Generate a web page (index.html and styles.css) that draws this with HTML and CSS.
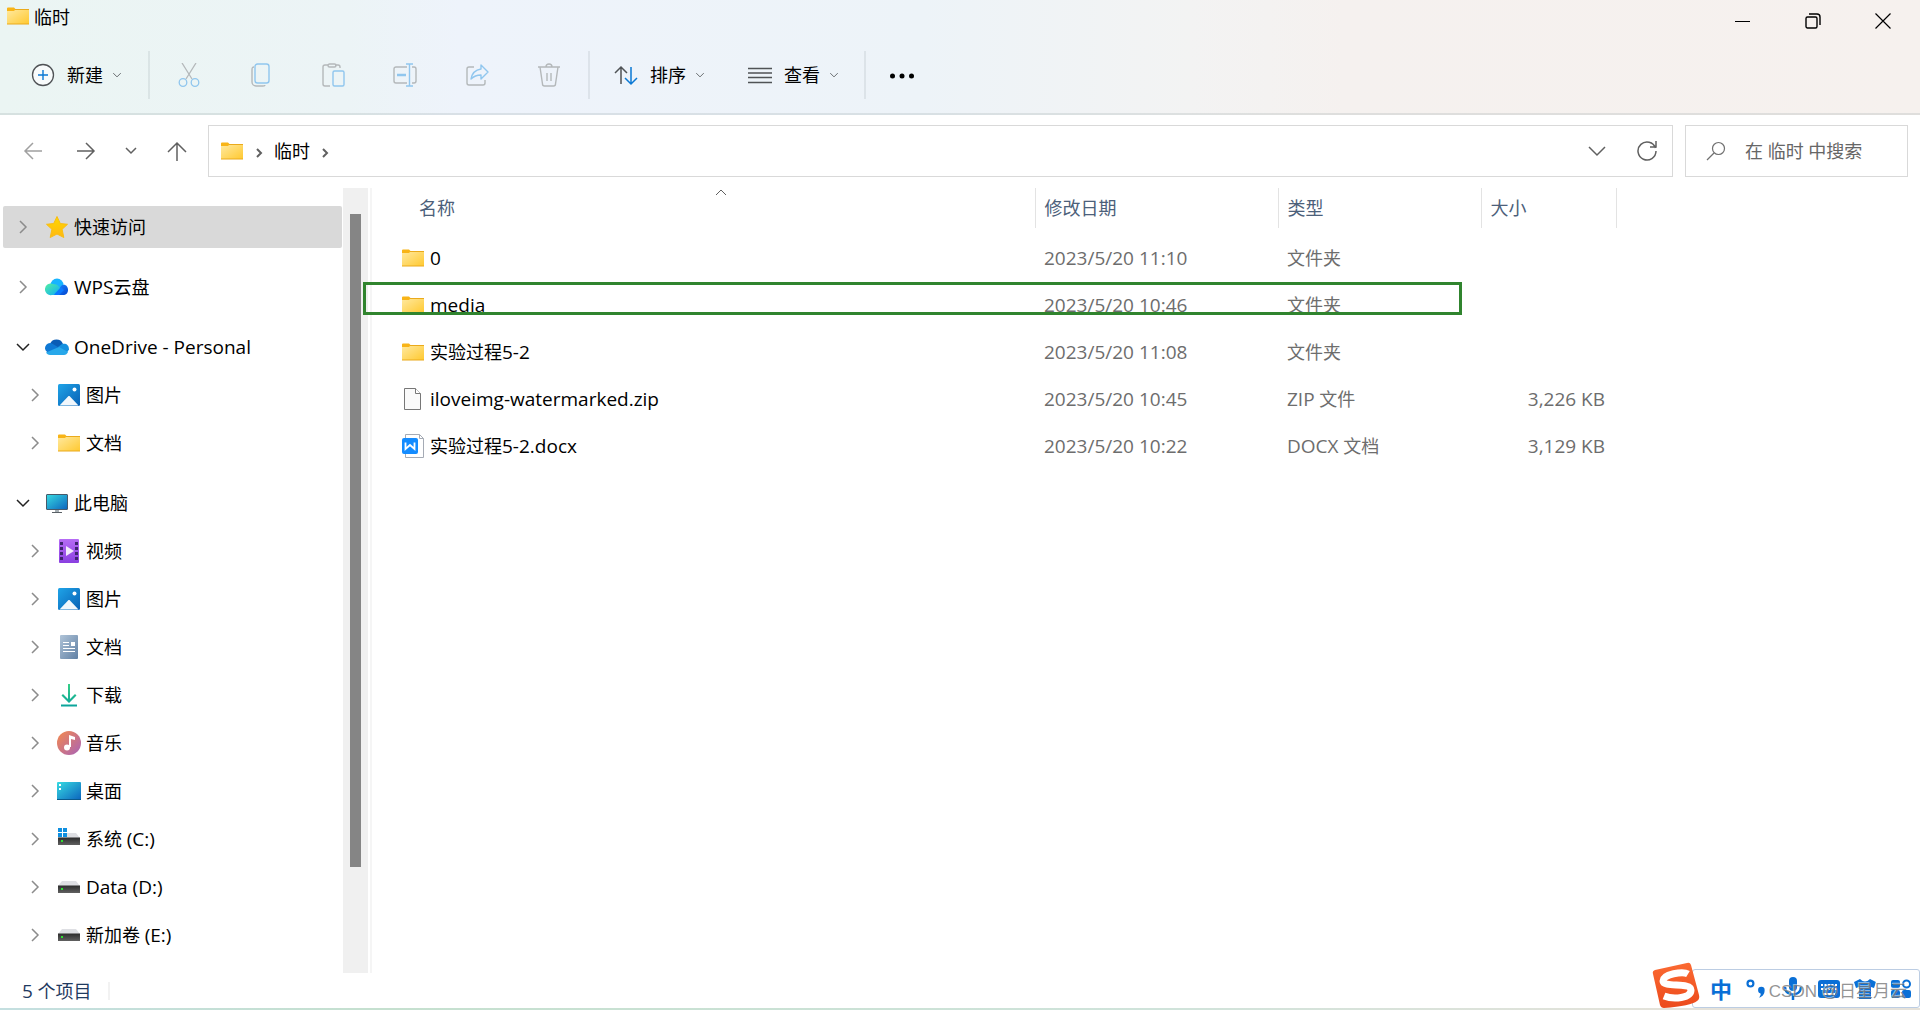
FILE: index.html
```html
<!DOCTYPE html>
<html lang="zh-CN">
<head>
<meta charset="utf-8">
<title>临时</title>
<link rel="stylesheet" href="styles.css">
</head>
<body>
<svg class="defs" aria-hidden="true">
  <defs>
    <linearGradient id="gFolder" x1="0" y1="0" x2="1" y2="1"><stop offset="0" stop-color="#ffe9a0"/><stop offset="1" stop-color="#ffc930"/></linearGradient>
    <linearGradient id="gBlue" x1="0" y1="0" x2="1" y2="1"><stop offset="0" stop-color="#1fa4e8"/><stop offset="1" stop-color="#0860b4"/></linearGradient>
    <linearGradient id="gCyan" x1="0" y1="0" x2="1" y2="1"><stop offset="0" stop-color="#37dbe2"/><stop offset="1" stop-color="#0c63bd"/></linearGradient>
    <linearGradient id="gVideo" x1="0" y1="0" x2="0" y2="1"><stop offset="0" stop-color="#b66cf5"/><stop offset="1" stop-color="#8a3fe0"/></linearGradient>
    <linearGradient id="gDoc" x1="0" y1="0" x2="1" y2="1"><stop offset="0" stop-color="#b0c4d8"/><stop offset="1" stop-color="#6080a4"/></linearGradient>
    <linearGradient id="gDown" x1="0" y1="0" x2="0" y2="1"><stop offset="0" stop-color="#36cf86"/><stop offset="1" stop-color="#0aa39c"/></linearGradient>
    <linearGradient id="gMusic" x1="0" y1="0" x2="1" y2="1"><stop offset="0" stop-color="#f58a4c"/><stop offset="1" stop-color="#a862b8"/></linearGradient>
    <linearGradient id="gStar" x1="0" y1="0" x2="0" y2="1"><stop offset="0" stop-color="#ffd800"/><stop offset="1" stop-color="#ffb812"/></linearGradient>
    <linearGradient id="gWpsL" x1="0" y1="0" x2="1" y2="1"><stop offset="0" stop-color="#52f0a0"/><stop offset="1" stop-color="#0aa8ff"/></linearGradient>
    <linearGradient id="gWpsR" x1="0" y1="0" x2="1" y2="1"><stop offset="0" stop-color="#1a86ff"/><stop offset="1" stop-color="#0346d0"/></linearGradient>
    <linearGradient id="gDrive" x1="0" y1="0" x2="0" y2="1"><stop offset="0" stop-color="#2c2c2c"/><stop offset="1" stop-color="#606060"/></linearGradient>
    <linearGradient id="gS" x1="0" y1="0" x2="0" y2="1"><stop offset="0" stop-color="#fb6a32"/><stop offset="1" stop-color="#ec4a1c"/></linearGradient>
    <symbol id="folder" viewBox="0 1 24 24"><path d="M1 5.500a1 1 0 0 1 1-1h6l1.500 1.500-1 3H1z" fill="#f8b417" stroke="none"/><path d="M1 8h7l1.500-1.500H23V21H1z" fill="url(#gFolder)" stroke="none"/><path d="M9 6.500h14M1 21h22" stroke="#eaaa1c" stroke-width="1" fill="none"/></symbol>
    <symbol id="star" viewBox="0 0 24 24"><path d="M12 1.500l3.300 7 7.200.8-5.400 5 1.700 8.200L12 19l-6.800 3.500 1.700-8.200-5.400-5 7.200-.8z" fill="url(#gStar)" stroke="#f9bd14" stroke-linejoin="round"/></symbol>
    <symbol id="wps" viewBox="0 0 24 24"><circle cx="12" cy="10" r="6.500" fill="#17b4ff"/><path d="M11 20l5-9c3-3 7-.5 7 4 0 3-2 5-5 5z" fill="url(#gWpsR)"/><path d="M7 20a5.800 5.800 0 1 1 1-11c5 0 6 3 8 5l-5 6z" fill="url(#gWpsL)"/><path d="M10 18.500l6-6.500 3 3-5 5h-5z" fill="#0a78ff"/></symbol>
    <symbol id="onedrive" viewBox="0 0 24 24"><path d="M5 9a7 7 0 0 1 13 0l-5 5z" fill="#0a5cb5"/><path d="M4 18a5 5 0 1 1 3-9.500l10 6-7 4z" fill="#0f78d4"/><path d="M13 12l4-3c4-1 7 1 7 5.500l-2 3z" fill="#1490df"/><path d="M1 17.500l13-5.500 9 5c-1 2-2 3-4 3H5c-2 0-3-1-4-2.500z" fill="#28a8ea"/></symbol>
    <symbol id="picture" viewBox="0 0 24 24"><rect x="1" y="1" width="22" height="22" rx="1.500" fill="url(#gBlue)"/><path d="M2.500 22.500l9-9.500h1l9 9.500z" fill="#f1f7fc"/><circle cx="17.500" cy="6.500" r="2" fill="#fff"/></symbol>
    <symbol id="pc" viewBox="0 0 24 24"><path d="M10 19h4v2h-4z" fill="#a7afb4"/><path d="M7 21.500h10" stroke="#596065"/><rect x="1.500" y="3.500" width="21" height="15" rx=".5" fill="url(#gCyan)" stroke="#47596a"/></symbol>
    <symbol id="video" viewBox="0 0 24 24"><rect x="2" y="0" width="20" height="24" rx="1" fill="url(#gVideo)"/><path d="M4.500 3v19M19.500 3v19" stroke="#3f2470" stroke-width="3" stroke-dasharray="3 2"/><path d="M9 7l8 5-8 5z" fill="#f3ebfb"/></symbol>
    <symbol id="document" viewBox="0 0 24 24"><rect x="3" y="0" width="18" height="24" rx="1" fill="url(#gDoc)"/><path d="M6 7.500h6M6 10.500h6M6 13.500h12M6 16.500h12" stroke="#fff"/><path d="M14 7h4v4h-4z" fill="#fff"/></symbol>
    <symbol id="download" viewBox="0 0 24 24"><path d="M11 1h2v15l5-5 1.500 1.500L12 20l-7.500-7.500L6 11l5 5zM4 21.500h16v2H4z" fill="url(#gDown)"/></symbol>
    <symbol id="music" viewBox="0 0 24 24"><circle cx="12" cy="12" r="12" fill="url(#gMusic)"/><circle cx="10" cy="16.500" r="3" fill="#fff"/><path d="M12 16V4l6 2v3l-4-1v8z" fill="#fff"/></symbol>
    <symbol id="desktop" viewBox="0 0 24 24"><rect y="3" width="24" height="18" rx="1" fill="url(#gCyan)"/><path d="M0 20.500h24" stroke="#0a5a8c"/><path d="M2 5h2v2H2zM2 9h2v2H2z" fill="#fff"/></symbol>
    <symbol id="drive" viewBox="0 0 24 24"><path d="M5 6h14l4 5H1z" fill="#dedfe3"/><rect x="1" y="10.500" width="22" height="7.500" fill="url(#gDrive)"/><path d="M4 13h2v2H4z" fill="#2de030"/></symbol>
    <symbol id="sysdrive" viewBox="0 0 24 24"><path d="M5 6h14l4 5H1z" fill="#dedfe3"/><rect x="1" y="10.500" width="22" height="7.500" fill="url(#gDrive)"/><path d="M4 13h2v2H4z" fill="#2de030"/><path d="M1 1h9v9H1z" fill="#fff"/><path d="M1 1h4v4H1zM6 1h4v4H6zM1 6h4v4H1zM6 6h4v4H6z" fill="#0f8fe0"/></symbol>
    <symbol id="file" viewBox="0 0 24 24"><path d="M3.500 1.500h11l5 5v16h-16z" fill="#fafafa" stroke="#777"/><path d="M14.500 1.500v5h5" fill="#fff" stroke="#777"/></symbol>
    <symbol id="docx" viewBox="0 0 24 24"><path d="M4.500 .5h14l4 4v19h-18z" fill="#fff" stroke="#a5abb5"/><path d="M18.500.5v4h4" fill="none" stroke="#a5abb5"/><rect x="1" y="4" width="16" height="16" rx="2" fill="#148cff"/><path d="M4.500 8.500v6.500l4.500-4 4.500 4V8.500" fill="none" stroke="#fff" stroke-width="1.800"/></symbol>
    <symbol id="right" viewBox="0 0 16 16"><path d="M5 2l6 6-6 6" fill="none" stroke="currentColor" stroke-width="1.500"/></symbol>
    <symbol id="down" viewBox="0 0 16 16"><path d="M2 5l6 6 6-6" fill="none" stroke="currentColor" stroke-width="1.500"/></symbol>
  </defs>
</svg>

<header class="top">
  <div class="titlebar">
    <h1 class="title"><svg class="ico"><use href="#folder"/></svg>临时</h1>
    <div class="winbtns">
      <button aria-label="最小化"><svg viewBox="0 0 16 16"><path d="M0 8.500h15" stroke="#000"/></svg></button>
      <button aria-label="还原"><svg viewBox="0 0 16 16" fill="none" stroke="#000" stroke-width="1.400"><rect x="1" y="4" width="11" height="11" rx="1.500"/><path d="M4 1h8a3 3 0 0 1 3 3v8"/></svg></button>
      <button aria-label="关闭"><svg viewBox="0 0 16 16"><path d="M.5.5l15 15M15.500.5l-15 15" stroke="#000" stroke-width="1.200"/></svg></button>
    </div>
  </div>
  <div class="toolbar">
    <button class="cmd new"><svg class="ico" viewBox="0 0 24 24" fill="none"><circle cx="12" cy="12" r="10.500" stroke="#505356" stroke-width="1.300" fill="#f8fbfb"/><path d="M12 7v10M7 12h10" stroke="#0a78d4" stroke-width="1.400"/></svg>新建<svg class="mini"><use href="#down"/></svg></button>
    <span class="sep"></span>
    <div class="icons">
      <button disabled aria-label="剪切"><svg viewBox="0 0 24 24" fill="none" stroke-width="1.300"><path d="M5 0l10 16M19 0L9 16" stroke="#b4b8ba"/><circle cx="6" cy="19.500" r="3.800" stroke="#90c6ee"/><circle cx="18" cy="19.500" r="3.800" stroke="#90c6ee"/></svg></button>
      <button disabled aria-label="复制"><svg viewBox="0 0 24 24" fill="none" stroke-width="1.400"><path d="M5 4c-2 0-2 1-2 3v12a4 4 0 0 0 4 4h7c2 0 2-1 2-1" stroke="#b4b8ba"/><rect x="6" y="1" width="14" height="19" rx="2.500" stroke="#90c6ee"/></svg></button>
      <button disabled aria-label="粘贴"><svg viewBox="0 0 24 24" fill="none" stroke-width="1.400"><path d="M9 23H4a2 2 0 0 1-2-2V4a2 2 0 0 1 2-2h3M14 2h3a2 2 0 0 1 2 2v1" stroke="#b4b8ba"/><rect x="7" y="1" width="8" height="3" rx="1.500" stroke="#b4b8ba"/><rect x="12" y="8" width="11" height="15" rx="1.500" stroke="#90c6ee"/></svg></button>
      <button disabled aria-label="重命名"><svg viewBox="0 0 24 24" fill="none" stroke-width="1.400"><path d="M14 4H3a2 2 0 0 0-2 2v12a2 2 0 0 0 2 2h11M19 4h2a2 2 0 0 1 2 2v12a2 2 0 0 1-2 2h-2" stroke="#b4b8ba"/><path d="M13 1h7M13 23h7M16.500 1v22" stroke="#90c6ee"/><path d="M4 12h9" stroke="#90c6ee" stroke-width="2.500"/></svg></button>
      <button disabled aria-label="共享"><svg viewBox="0 0 24 24" fill="none" stroke-width="1.400"><path d="M9 4H4a2 2 0 0 0-2 2v14a2 2 0 0 0 2 2h14a2 2 0 0 0 2-2v-3" stroke="#b4b8ba"/><path d="M16 2l7 7-7 7v-4c-4 0-7 1-10 4 1-6 4-9 10-10z" stroke="#90c6ee" stroke-linejoin="round"/></svg></button>
      <button disabled aria-label="删除"><svg viewBox="0 0 24 24" fill="none" stroke="#b4b8ba" stroke-width="1.400"><path d="M1 4h22M3 4l2.500 17a2 2 0 0 0 2 2h9a2 2 0 0 0 2-2L21 4M9 4c0-4 6-4 6 0M10 10v8M14 10v8"/></svg></button>
    </div>
    <span class="sep"></span>
    <button class="cmd sort"><svg class="ico" viewBox="0 0 24 24" fill="none" stroke-width="1.500"><path d="M7 21V4M1 10l6-6 6 6" stroke="#505356"/><path d="M17 4v17M11 15l6 6 6-6" stroke="#0a78d4"/></svg>排序<svg class="mini"><use href="#down"/></svg></button>
    <button class="cmd view"><svg class="ico" viewBox="0 0 24 24"><path d="M0 5.500h24M0 10h24M0 14.500h24M0 19.500h24" stroke="#505356" stroke-width="1.300"/></svg>查看<svg class="mini"><use href="#down"/></svg></button>
    <span class="sep"></span>
    <button class="cmd more" aria-label="更多"><svg class="ico" viewBox="0 0 24 24"><circle cx="2.500" cy="13" r="2.500"/><circle cx="12" cy="13" r="2.500"/><circle cx="21.500" cy="13" r="2.500"/></svg></button>
  </div>
</header>

<div class="navrow">
  <div class="navbtns">
    <button class="dim" aria-label="后退"><svg viewBox="0 0 20 20"><path d="M19 10H2M10 2l-8 8 8 8"/></svg></button>
    <button aria-label="前进"><svg viewBox="0 0 20 20"><path d="M1 10h17M10 2l8 8-8 8"/></svg></button>
    <button class="recent" aria-label="最近位置"><svg viewBox="0 0 16 16"><path d="M3 5l5 5 5-5"/></svg></button>
    <button aria-label="向上"><svg viewBox="0 0 20 20"><path d="M10 20V2M1 11l9-9 9 9"/></svg></button>
  </div>
  <nav class="address">
    <svg class="ico"><use href="#folder"/></svg>
    <svg class="crumb" viewBox="0 0 12 12"><path d="M4 2l4 4-4 4"/></svg>
    <a href="#">临时</a>
    <svg class="crumb" viewBox="0 0 12 12"><path d="M4 2l4 4-4 4"/></svg>
    <button class="drop" aria-label="历史记录"><svg viewBox="0 0 20 20"><path d="M2 6l8 8 8-8"/></svg></button>
    <button class="reload" aria-label="刷新"><svg viewBox="0 0 20 20"><path d="M18.500 7A9 9 0 1 0 19 10M19 0v6h-6"/></svg></button>
  </nav>
  <label class="search"><svg viewBox="0 0 20 20"><circle cx="12.500" cy="7.500" r="6"/><path d="M8 12l-7 7"/></svg><input type="search" placeholder="在 临时 中搜索" aria-label="在 临时 中搜索"></label>
</div>

<div class="body">
  <aside class="tree">
    <ul>
      <li class="selected"><button aria-label="展开"><svg><use href="#right"/></svg></button><a href="#"><svg class="ico"><use href="#star"/></svg>快速访问</a></li>
    </ul>
    <ul>
      <li><button aria-label="展开"><svg><use href="#right"/></svg></button><a href="#"><svg class="ico"><use href="#wps"/></svg><span><span class="en">WPS</span>云盘</span></a></li>
    </ul>
    <ul>
      <li class="open"><button aria-label="折叠"><svg><use href="#down"/></svg></button><a href="#"><svg class="ico"><use href="#onedrive"/></svg><span class="en">OneDrive - Personal</span></a></li>
      <li class="sub"><button aria-label="展开"><svg><use href="#right"/></svg></button><a href="#"><svg class="ico"><use href="#picture"/></svg>图片</a></li>
      <li class="sub"><button aria-label="展开"><svg><use href="#right"/></svg></button><a href="#"><svg class="ico"><use href="#folder"/></svg>文档</a></li>
    </ul>
    <ul>
      <li class="open"><button aria-label="折叠"><svg><use href="#down"/></svg></button><a href="#"><svg class="ico"><use href="#pc"/></svg>此电脑</a></li>
      <li class="sub"><button aria-label="展开"><svg><use href="#right"/></svg></button><a href="#"><svg class="ico"><use href="#video"/></svg>视频</a></li>
      <li class="sub"><button aria-label="展开"><svg><use href="#right"/></svg></button><a href="#"><svg class="ico"><use href="#picture"/></svg>图片</a></li>
      <li class="sub"><button aria-label="展开"><svg><use href="#right"/></svg></button><a href="#"><svg class="ico"><use href="#document"/></svg>文档</a></li>
      <li class="sub"><button aria-label="展开"><svg><use href="#right"/></svg></button><a href="#"><svg class="ico"><use href="#download"/></svg>下载</a></li>
      <li class="sub"><button aria-label="展开"><svg><use href="#right"/></svg></button><a href="#"><svg class="ico"><use href="#music"/></svg>音乐</a></li>
      <li class="sub"><button aria-label="展开"><svg><use href="#right"/></svg></button><a href="#"><svg class="ico"><use href="#desktop"/></svg>桌面</a></li>
      <li class="sub"><button aria-label="展开"><svg><use href="#right"/></svg></button><a href="#"><svg class="ico"><use href="#sysdrive"/></svg><span>系统 <span class="en">(C:)</span></span></a></li>
      <li class="sub"><button aria-label="展开"><svg><use href="#right"/></svg></button><a href="#"><svg class="ico"><use href="#drive"/></svg><span class="en">Data (D:)</span></a></li>
      <li class="sub"><button aria-label="展开"><svg><use href="#right"/></svg></button><a href="#"><svg class="ico"><use href="#drive"/></svg><span>新加卷 <span class="en">(E:)</span></span></a></li>
    </ul>
  </aside>
  <div class="scrollbar"><div class="thumb"></div></div>
  <main class="files">
    <table>
      <colgroup><col class="c-name"><col class="c-date"><col class="c-type"><col class="c-size"></colgroup>
      <thead><tr><th>名称<svg class="sortmark" viewBox="0 0 12 8"><path d="M1 7l5-5 5 5"/></svg></th><th>修改日期</th><th>类型</th><th>大小</th></tr></thead>
      <tbody>
        <tr><td><a href="#"><svg class="ico"><use href="#folder"/></svg><span class="en">0</span></a></td><td class="en">2023/5/20 11:10</td><td>文件夹</td><td></td></tr>
        <tr><td><a href="#"><svg class="ico"><use href="#folder"/></svg><span class="en">media</span></a></td><td class="en">2023/5/20 10:46</td><td>文件夹</td><td></td></tr>
        <tr><td><a href="#"><svg class="ico"><use href="#folder"/></svg><span>实验过程<span class="en">5-2</span></span></a></td><td class="en">2023/5/20 11:08</td><td>文件夹</td><td></td></tr>
        <tr><td><a href="#"><svg class="ico"><use href="#file"/></svg><span class="en">iloveimg-watermarked.zip</span></a></td><td class="en">2023/5/20 10:45</td><td><span class="en">ZIP</span> 文件</td><td class="en">3,226 KB</td></tr>
        <tr><td><a href="#"><svg class="ico"><use href="#docx"/></svg><span>实验过程<span class="en">5-2.docx</span></span></a></td><td class="en">2023/5/20 10:22</td><td><span class="en">DOCX</span> 文档</td><td class="en">3,129 KB</td></tr>
      </tbody>
    </table>
    <div class="highlight"></div>
  </main>
</div>

<footer class="status"><span><span class="en">5</span> 个项目</span></footer>

<div class="ime">
  <svg class="slogo" viewBox="0 0 48 48"><path d="M3 8L35 1q3-1 4 2l8 30q1 4-2 6-6 5-33 7-3 0-4-3L1 12q-1-3 2-4z" fill="url(#gS)"/><path d="M36 12C31 9 11 12 11 19s28 1 28 9-17 10-27 6" fill="none" stroke="#fff" stroke-width="7"/></svg>
  <span class="zh">中</span>
  <svg class="punct" viewBox="0 0 20 22"><circle cx="4" cy="6" r="2.700" fill="none" stroke="#0a6fd6" stroke-width="2"/><path d="M11 12a3 3 0 0 1 6 0c0 4-2 6-5 7 1-2 2-3 1-4-1 0-2-1-2-3z" fill="#0a6fd6"/></svg>
  <svg viewBox="0 0 22 24"><rect x="7" y="0" width="8" height="14" rx="4" fill="#0a6fd6"/><path d="M3 10c0 10 16 10 16 0M11 18v5" fill="none" stroke="#0a6fd6" stroke-width="2.500"/></svg>
  <svg viewBox="0 0 22 24"><rect y="3" width="22" height="18" rx="3" fill="#0a6fd6"/><path d="M3 8h16M3 12h16" stroke="#fff" stroke-width="2" stroke-dasharray="2 1.500"/><path d="M5 17h12" stroke="#fff" stroke-width="2"/></svg>
  <svg viewBox="0 0 22 24"><path d="M6 2q5 5 10 0l6 3-2 6-3-1v12H5V10l-3 1-2-6z" fill="#0a6fd6"/></svg>
  <svg viewBox="0 0 22 24" fill="#0a6fd6"><rect x="1" y="3" width="9" height="8" rx="2"/><circle cx="16.500" cy="7" r="3.500" fill="none" stroke="#0a6fd6" stroke-width="2"/><rect x="1" y="13" width="9" height="8" rx="2"/><rect x="12" y="13" width="9" height="8" rx="2"/></svg>
  <span class="watermark">CSDN @日星月云</span>
</div>
</body>
</html>
```
FILE: styles.css
```css
* { box-sizing: border-box; }
body {
  margin: 0;
  min-height: 100vh;
  display: flex;
  flex-direction: column;
  position: relative;
  background: #fff;
  color: #000;
  font: 18px/24px "Open Sans", "Noto Sans CJK SC", sans-serif;
}
.defs { position: absolute; width: 0; height: 0; }
button { border: 0; padding: 0; background: none; color: inherit; font: inherit; display: flex; align-items: center; justify-content: center; }
a { color: inherit; text-decoration: none; }
svg { flex: none; }
.ico { width: 24px; height: 24px; }
.en { font-size: 19px; }

.top {
  height: 115px;
  border-bottom: 2px solid rgba(120, 140, 140, .18);
  background: linear-gradient(90deg, #ebf5f3 0, #ecf4f6 18%, #eef3fb 24%, #edf3f8 48%, #f3f3f3 62%, #f5f1ef 70%, #f6f1ee 100%);
}
.titlebar { display: flex; justify-content: space-between; height: 42px; }
.title { display: flex; align-items: center; gap: 4px; margin: 0; height: 34px; padding-left: 6px; font-size: 18px; font-weight: 400; }
.title .ico { margin-top: -3px; }
.winbtns { display: flex; padding-right: 2px; }
.winbtns button { width: 70px; height: 42px; }
.winbtns svg { width: 16px; height: 16px; }

.toolbar { display: flex; align-items: center; height: 66px; }
.cmd { height: 48px; }
.cmd .ico { margin-right: 12px; }
.mini { width: 10px; height: 10px; margin-left: 9px; color: #606468; }
.new { width: 148px; justify-content: flex-start; padding-left: 31px; }
.sep { width: 2px; height: 48px; background: rgba(100, 115, 120, .12); }
.icons { display: flex; padding: 0 3px; }
.icons button { width: 72px; height: 48px; }
.icons svg { width: 24px; height: 24px; }
.sort { padding-left: 24px; }
.view { padding: 0 25px 0 43px; }
.more { padding-left: 24px; }

.navrow { display: flex; align-items: center; height: 73px; padding: 0 12px 1px 14px; }
.navbtns { display: flex; width: 194px; gap: 16px; color: #606060; }
.navbtns button { width: 37px; height: 40px; }
.navbtns svg, .navrow .crumb, .address button svg, .search svg { fill: none; stroke: currentColor; stroke-width: 1.5; }
.navbtns svg { width: 20px; height: 20px; }
.navbtns .recent { width: 18px; margin: 0 2px; }
.navbtns .recent svg { width: 16px; height: 16px; }
.navbtns .dim { color: #a0a0a0; }
.address { flex: 1; display: flex; align-items: center; height: 52px; border: 1px solid #d9d9d9; padding: 0 15px 0 11px; }
.navrow .crumb { width: 12px; height: 12px; margin: 3px 9px 0; color: #606060; stroke-width: 2; }
.address .drop { margin-left: auto; color: #606060; }
.address .reload { margin-left: 30px; color: #606060; }
.address button svg { width: 20px; height: 20px; }
.search { display: flex; align-items: center; gap: 19px; width: 223px; height: 52px; margin-left: 12px; border: 1px solid #d9d9d9; padding-left: 20px; color: #707070; }
.search svg { width: 20px; height: 20px; stroke-width: 1.2; }
.search input { width: 150px; border: 0; padding: 0; outline: 0; background: none; font: inherit; }
.search input::placeholder { color: #666; opacity: 1; }

.body { flex: 1; display: flex; }
.tree { width: 343px; padding: 15px 1px 12px 3px; }
.tree ul { list-style: none; margin: 0 0 12px; padding: 0; }
.tree ul:last-child { margin: 0; }
.tree li { display: flex; align-items: center; height: 48px; padding: 3px 0 3px 12px; }
.tree .selected { height: 42px; margin: 3px 0 15px; background: #d9d9d9; border-radius: 2px; }
.tree li.sub { padding-left: 24px; }
.tree button { width: 16px; height: 24px; color: #8c8c8c; }
.tree .open button { color: #222; }
.tree button svg { width: 16px; height: 16px; }
.tree a { display: flex; align-items: center; gap: 5px; padding-left: 14px; white-space: nowrap; }
.scrollbar { width: 25px; background: #f0f0f0; padding: 26px 7px 106px; }
.thumb { width: 11px; height: 100%; background: #858585; }

.files { position: relative; flex: 1; margin-left: 2px; border-left: 2px solid #f5f5f5; }
table { border-collapse: collapse; table-layout: fixed; width: 1244px; }
.c-name { width: 663px; }
.c-date { width: 243px; }
.c-type { width: 203px; }
.c-size { width: 135px; }
th { position: relative; height: 40px; padding: 0 9px; border-right: 1px solid #e3e3e3; text-align: left; font-weight: 400; color: #4c607a; }
th:first-child { padding-left: 47px; }
thead::after { content: ""; display: block; height: 6px; }
.sortmark { position: absolute; left: 50%; top: 0; width: 12px; height: 8px; margin-left: 12px; fill: none; stroke: #606060; }
td { height: 47px; padding: 0 9px; color: #6d6d6d; }
td:first-child { padding-left: 29px; color: #000; }
td:last-child { padding-right: 11px; text-align: right; }
td a { display: flex; align-items: center; gap: 5px; }
.highlight { position: absolute; left: -9px; top: 94px; width: 1099px; height: 33px; border: 3px solid #30842e; }

.status { display: flex; align-items: center; height: 37px; padding-left: 22px; color: #1f3a5f; border-bottom: 2px solid; border-image: linear-gradient(90deg, #c4dfe0, #c5e0cf 20%, #cfe3da 60%, #e6e2da 90%) 1; }
.status > span { padding-right: 16px; border-right: 2px solid #f2f2f2; line-height: 18px; }

.ime { position: absolute; right: 0; bottom: 2px; display: flex; align-items: center; gap: 14px; height: 39px; width: 228px; padding-left: 17px; background: #fff; border: 1px solid #bccde3; border-radius: 3px; }
.ime svg { width: 22px; height: 24px; }
.ime .slogo { position: absolute; left: -41px; top: -8px; width: 48px; height: 48px; }
.zh { color: #0a6fd6; font-size: 22px; font-weight: 700; line-height: 36px; }
.watermark { position: absolute; right: 12px; top: 10px; font: 17px/24px "Liberation Sans", "Noto Sans CJK SC", sans-serif; color: rgba(120, 120, 120, .8); text-shadow: -1px -1px 0 rgba(255, 255, 255, .5); white-space: nowrap; }
```
